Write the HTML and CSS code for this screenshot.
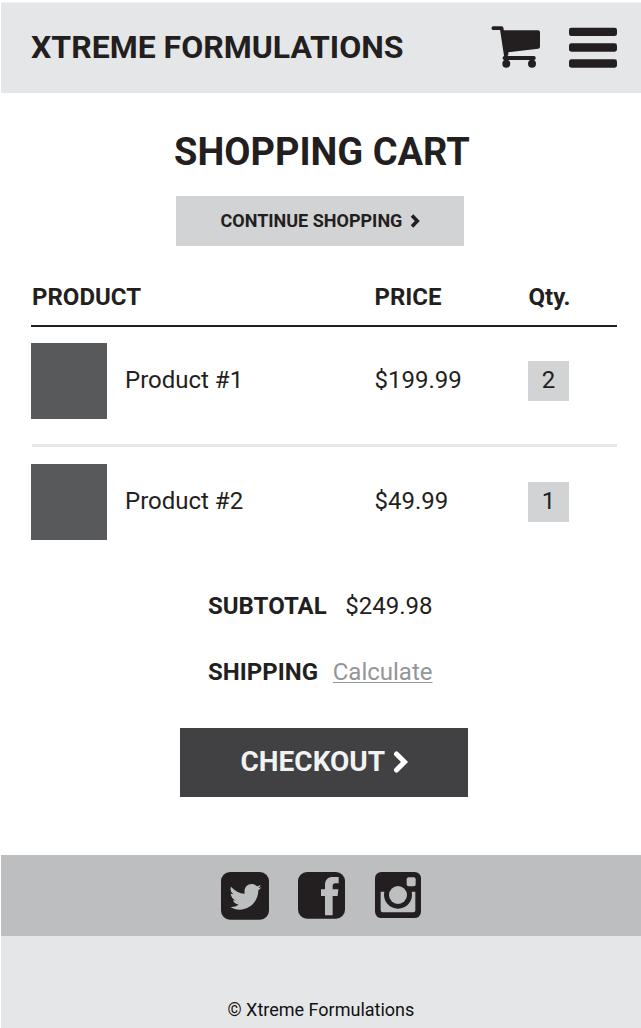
FILE: index.html
```html
<!DOCTYPE html>
<html lang="en">
<head>
<meta charset="utf-8">
<title>Shopping Cart</title>
<link rel="stylesheet" href="styles.css">
</head>
<body>
<header class="site-header">
  <div class="brand">XTREME FORMULATIONS</div>
  <svg class="cart-icon" viewBox="33 78 150 129" aria-label="Cart">
    <path d="M40 84.500H65L78 170" fill="none" stroke="#231f20" stroke-width="11" stroke-linecap="round" stroke-linejoin="round"/>
    <path d="M64 91H174Q180 91 180 97V140Q180 145 175 146L85 157V166H74Z"/>
    <rect x="68" y="168" width="99" height="12" rx="5"/>
    <circle cx="79" cy="191" r="12"/><circle cx="156" cy="191" r="12"/>
  </svg>
  <svg class="menu-icon" viewBox="267 81 144 126" aria-label="Menu">
    <rect x="267" y="83" width="144" height="25" rx="7"/>
    <rect x="267" y="130" width="144" height="25" rx="7"/>
    <rect x="267" y="178" width="144" height="25" rx="7"/>
  </svg>
</header>
<main class="cart">
  <h1 class="title">SHOPPING CART</h1>
  <a class="continue"><span class="continue-label">CONTINUE SHOPPING</span><svg class="chev-small" viewBox="0 0 10 14"><path d="M2 1.500L7.300 7L2 12.500"/></svg></a>
  <div class="row head"><span class="head-product">PRODUCT</span><span class="head-price">PRICE</span><span class="head-qty">Qty.</span></div>
  <div class="row item">
    <div class="product"><div class="thumb"></div><span class="name">Product #1</span></div>
    <span class="price">$199.99</span><span class="qty">2</span>
  </div>
  <div class="divider"></div>
  <div class="row item second">
    <div class="product"><div class="thumb"></div><span class="name">Product #2</span></div>
    <span class="price">$49.99</span><span class="qty">1</span>
  </div>
  <div class="totals">
    <div class="total"><b class="subtotal-label">SUBTOTAL</b><span class="subtotal">$249.98</span></div>
    <div class="total"><b class="shipping-label">SHIPPING</b><a class="calculate">Calculate</a></div>
  </div>
  <a class="checkout"><span class="checkout-label">CHECKOUT</span><svg class="chev-large" viewBox="0 0 16 22"><path d="M3.500 3L11.500 11L3.500 19"/></svg></a>
</main>
<footer>
  <div class="social">
    <svg class="twitter" viewBox="0 0 144 143" aria-label="Twitter">
      <rect width="144" height="143" rx="27"/>
      <path class="cut" d="M30 44C41 57 55 64 71 65C68 48 78 36 92 36C99 36 104 39 108 43Q114 42 119 38Q118 44 112 48Q117 48 121 46Q118 51 112 55C112 87 88 113 56 113C45 113 36 110 28 105Q42 106 53 98Q40 96 36 85H45Q31 80 29 65L37 67Q25 58 30 44Z"/>
    </svg>
    <svg class="facebook" viewBox="0 0 141 140" aria-label="Facebook">
      <rect width="141" height="140" rx="27"/>
      <path class="cut" d="M81 130V72H69V52H81V40C81 22 90 15 105 15H122V34H112C106 34 104 37 104 43V52H121L119 72H104V130Z"/>
    </svg>
    <svg class="instagram" viewBox="0 0 138 138" aria-label="Instagram">
      <rect width="138" height="138" rx="19"/>
      <path class="cut" d="M17 59H28A42 42 0 1 0 110 59H121V115Q121 121 115 121H23Q17 121 17 115Z"/>
      <circle class="cut" cx="69" cy="69" r="27"/>
      <rect class="cut" x="95" y="16" width="27" height="27" rx="6"/>
    </svg>
  </div>
  <div class="copyright">© Xtreme Formulations</div>
</footer>
</body>
</html>
```
FILE: styles.css
```css
* { box-sizing: border-box; }
body { margin: 0; padding: 2px 0 0 1px; background: #fff; color: #231f20; font-family: Roboto, sans-serif; font-size: 24px; line-height: 28px; height: 1028px; overflow: hidden; }
svg { display: block; flex: none; fill: #231f20; }
span, b, a { white-space: nowrap; }
.site-header { height: 91px; background: #e5e6e8; display: flex; align-items: flex-start; padding-left: 30px; border-top: 1px solid #f0f0f1; }
.brand { width: 460px; padding-top: 24px; font-size: 32px; font-weight: 700; line-height: 40px; }
.cart-icon { width: 50px; height: 43px; margin-top: 23px; }
.menu-icon { width: 48px; height: 42px; margin: 24px 0 0 28px; }
.cart { height: 762px; padding: 36px 24px 0 30px; display: flex; flex-direction: column; }
.title { margin: 0; font-size: 38px; line-height: 46px; font-weight: 700; align-self: flex-start; padding-left: 143px; white-space: nowrap; }
.continue { width: 288px; height: 50px; margin: 21px 0 0 145px; background: #d1d3d4; display: flex; align-items: center; padding-left: 44.5px; font-size: 18px; font-weight: 700; }
.continue-label { width: 189.5px; }
.chev-small { width: 10px; height: 14px; }
.chev-small path { fill: none; stroke: #231f20; stroke-width: 3.6; }
.row { display: grid; grid-template-columns: 343px 154px 1fr; align-items: center; }
.head { height: 81px; padding-top: 22px; border-bottom: 2px solid #231f20; font-weight: 700; }
.head-product { padding-left: 1px; }
.head-price, .head-qty { padding-left: 0.5px; }
.item { height: 76px; margin-top: 16px; }
.product { display: flex; align-items: center; gap: 18px; }
.thumb { width: 75.5px; height: 76px; background: #58595b; }
.name { padding: 0 0 2px 0.5px; }
.price { padding: 0 0 2px 0.5px; }
.qty { width: 41px; height: 40px; background: #d1d3d4; display: flex; align-items: center; justify-content: center; padding-bottom: 2px; }
.divider { height: 3px; margin: 25px 0 0 1px; background: #e6e7e8; }
.second { margin-top: 17px; }
.totals { width: 224.5px; margin: 52px 0 0 177px; display: flex; flex-direction: column; gap: 38px; }
.total { display: flex; justify-content: space-between; }
.calculate { color: #939598; text-decoration: underline; text-decoration-thickness: 1px; text-underline-offset: 2px; }
.checkout { width: 288px; height: 69px; margin: 42px 0 0 149px; background: #414042; color: #f1f2f2; display: flex; align-items: center; padding: 0 0 2px 60.5px; font-size: 28px; font-weight: 700; }
.checkout-label { width: 152.5px; }
.chev-large { width: 16px; height: 22px; }
.chev-large path { fill: none; stroke: #fff; stroke-width: 5; stroke-linecap: round; }
.social { height: 81px; background: #bcbec0; display: flex; align-items: flex-start; padding: 17px 0 0 220px; }
.twitter { width: 48px; height: 47.7px; }
.facebook { width: 47px; height: 46.7px; margin-left: 29px; }
.instagram { width: 46px; height: 46px; margin-left: 30px; }
.cut { fill: #bcbec0; }
.copyright { height: 92px; background: #e5e6e8; color: #111; font-size: 18px; line-height: 22px; padding: 63px 0 0 226.5px; }
```
